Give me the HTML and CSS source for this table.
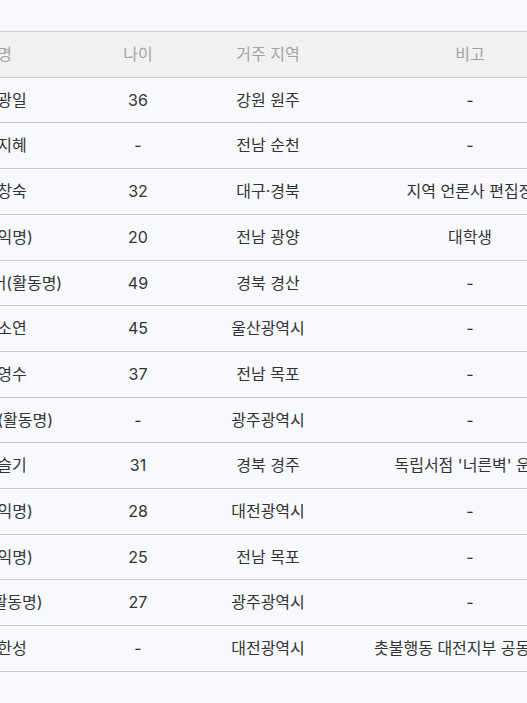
FILE: index.html
```html
<!DOCTYPE html>
<html lang="ko">
<head>
<meta charset="utf-8">
<title>명단</title>
<link rel="stylesheet" href="styles.css">
</head>
<body>
<div class="viewport">
  <table class="roster">
    <colgroup>
      <col class="c-name"><col class="c-age"><col class="c-region"><col class="c-note">
    </colgroup>
    <thead>
      <tr><th class="left">성명</th><th>나이</th><th>거주 지역</th><th>비고</th></tr>
    </thead>
    <tbody>
      <tr><td class="left">이광일</td><td>36</td><td>강원 원주</td><td>-</td></tr>
      <tr><td class="left">김지혜</td><td>-</td><td>전남 순천</td><td>-</td></tr>
      <tr><td class="left">이창숙</td><td>32</td><td>대구·경북</td><td>지역 언론사 편집장</td></tr>
      <tr><td class="left">J(익명)</td><td>20</td><td>전남 광양</td><td>대학생</td></tr>
      <tr><td class="left">J어(활동명)</td><td>49</td><td>경북 경산</td><td>-</td></tr>
      <tr><td class="left">박소연</td><td>45</td><td>울산광역시</td><td>-</td></tr>
      <tr><td class="left">정영수</td><td>37</td><td>전남 목포</td><td>-</td></tr>
      <tr><td class="left">별(활동명)</td><td>-</td><td>광주광역시</td><td>-</td></tr>
      <tr><td class="left">최슬기</td><td>31</td><td>경북 경주</td><td>독립서점 '너른벽' 운영</td></tr>
      <tr><td class="left">J(익명)</td><td>28</td><td>대전광역시</td><td>-</td></tr>
      <tr><td class="left">J(익명)</td><td>25</td><td>전남 목포</td><td>-</td></tr>
      <tr><td class="left">I(활동명)</td><td>27</td><td>광주광역시</td><td>-</td></tr>
      <tr><td class="left">윤한성</td><td>-</td><td>대전광역시</td><td>촛불행동 대전지부 공동대표단</td></tr>
    </tbody>
  </table>
</div>
</body>
</html>
```
FILE: styles.css
```css
html, body {
  margin: 0;
  padding: 0;
  background: #f8f9fc;
}
.viewport {
  width: 527px;
  height: 703px;
  overflow: hidden;
  padding-top: 31px;
  box-sizing: border-box;
}
.roster {
  margin-left: -33.5px;
  border-collapse: collapse;
  table-layout: fixed;
  width: 615px;
  font-family: Inter, "Noto Sans CJK KR", sans-serif;
  font-size: 16px;
  color: #333333;
}
.c-name { width: 131.5px; }
.c-age { width: 80px; }
.c-region { width: 180px; }
.c-note { width: 224px; }
.roster th,
.roster td {
  padding: 12px 16px;
  line-height: 20.7px;
  text-align: center;
  white-space: nowrap;
  border-bottom: 1px solid #c9c9cb;
}
.roster th {
  background: #f1f1f1;
  color: #a3a3a3;
  font-weight: 400;
  border-top: 1px solid #cfcfd1;
}
.roster .left { text-align: left; }
```
